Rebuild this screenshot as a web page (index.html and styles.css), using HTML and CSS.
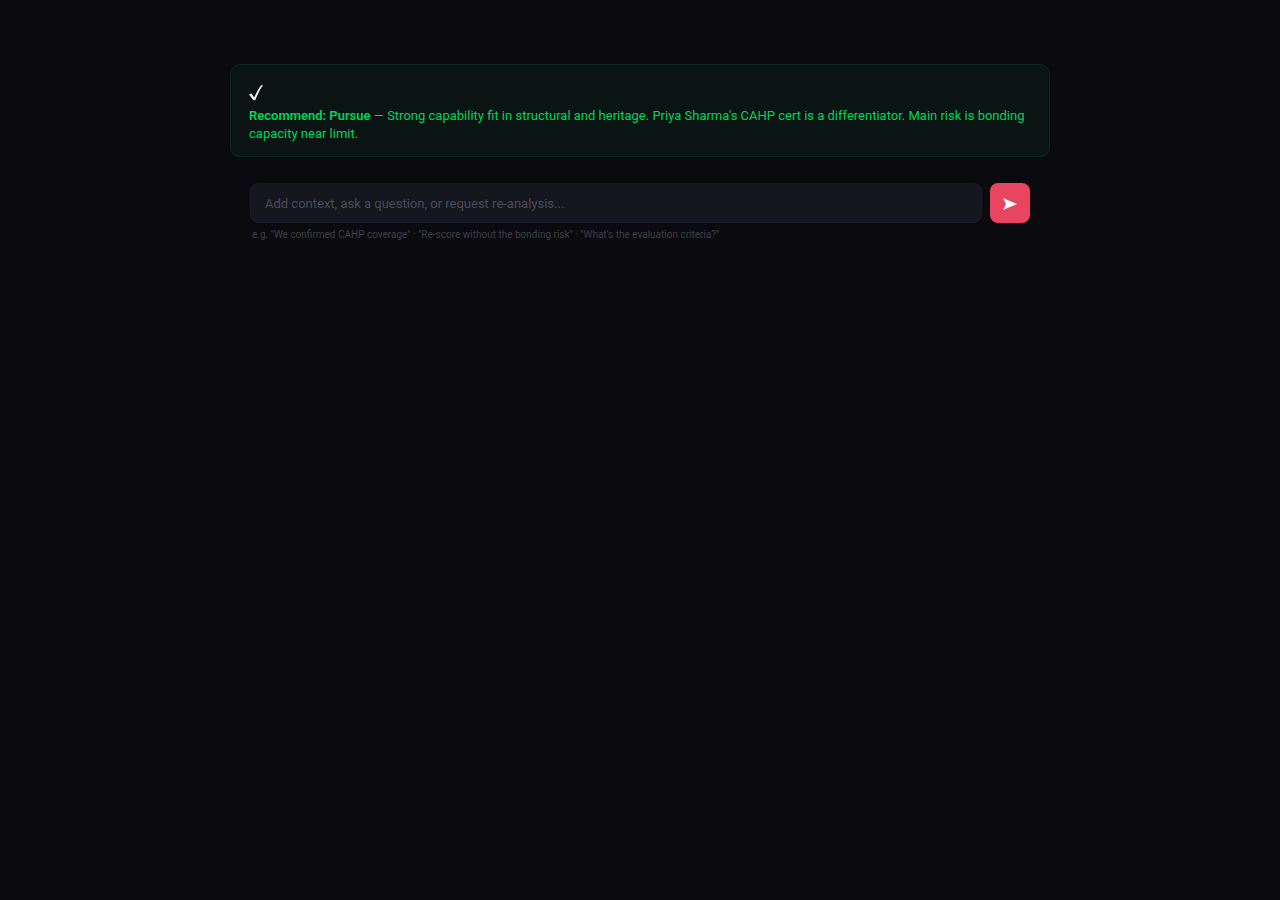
FILE: index.html
```html
<!DOCTYPE html>
<html lang="en">
<head>
    <meta charset="UTF-8">
    <meta name="viewport" content="width=device-width, initial-scale=1.0">
    <title>Bid Analysis</title>
    <link rel="stylesheet" href="styles.css">
</head>
<body>

    <main class="container">
        <!-- Recommendation -->
        <section class="recommendation">
            <svg class="check" viewBox="0 0 14 16" aria-hidden="true">
                <path d="M0 9.4 L2.4 8.4 L5.3 12.6 C7 8 9.4 3.8 12.2 0.3 L14 0.3 C10.8 4.6 8.5 9.6 6.3 15.3 L4.4 15.3 Z"/>
            </svg>
            <p class="verdict"><strong>Recommend: Pursue</strong> — Strong capability fit in structural and heritage. Priya Sharma's CAHP cert is a differentiator. Main risk is bonding capacity near limit.</p>
        </section>

        <!-- Follow-up -->
        <form class="followup" onsubmit="return false">
            <div class="followup-row">
                <input type="text" class="followup-input" aria-label="Follow-up" placeholder="Add context, ask a question, or request re-analysis...">
                <button type="submit" class="send-btn" aria-label="Send">
                    <svg class="send-icon" viewBox="0 0 14 14" aria-hidden="true">
                        <path d="M0 2 L14 8 L0 14 L3 8 Z"/>
                    </svg>
                </button>
            </div>
            <p class="hint">e.g. "We confirmed CAHP coverage" · "Re-score without the bonding risk" · "What's the evaluation criteria?"</p>
        </form>
    </main>

</body>
</html>
```

FILE: styles.css
```css
body {
    margin: 0;
    background-color: #0a0a0f;
    color: #e8e8f0;
    font-family: "Segoe UI", Roboto, "Noto Sans", sans-serif;
    font-size: 13px;
}
.container {
    max-width: 820px;
    margin: 0 auto;
    padding: 64px 20px;
}
.recommendation {
    padding: 20px 18px 13px;
    border: 1px solid #09291f;
    border-radius: 10px;
    background-color: #091413;
}
.check {
    display: block;
    width: 14px;
    height: 16px;
    margin-bottom: 6px;
    fill: #f0f0f8;
}
.verdict {
    margin: 0;
    line-height: 18px;
    color: #00d45c;
}
.verdict strong {
    font-weight: 600;
}
.followup {
    padding: 26px 20px 0;
}
.followup-row {
    display: flex;
    gap: 8px;
}
.followup-input {
    flex: 1;
    min-width: 0;
    height: 40px;
    box-sizing: border-box;
    padding: 0 14px;
    border: 1px solid #1a1a28;
    border-radius: 8px;
    background-color: #16161e;
    color: #e8e8f0;
    font: inherit;
}
.followup-input::placeholder {
    color: #4b4b58;
    opacity: 1;
}
.followup-input:focus {
    outline: none;
    border-color: #e94560;
}
.send-btn {
    display: flex;
    align-items: center;
    justify-content: center;
    width: 40px;
    height: 40px;
    padding: 0;
    border: none;
    border-radius: 8px;
    background-color: #e94560;
    cursor: pointer;
}
.send-icon {
    width: 14px;
    height: 14px;
    fill: #fff;
}
.hint {
    margin: 5px 2px 0;
    font-size: 10px;
    line-height: 14px;
    color: #3f3f48;
}
```
